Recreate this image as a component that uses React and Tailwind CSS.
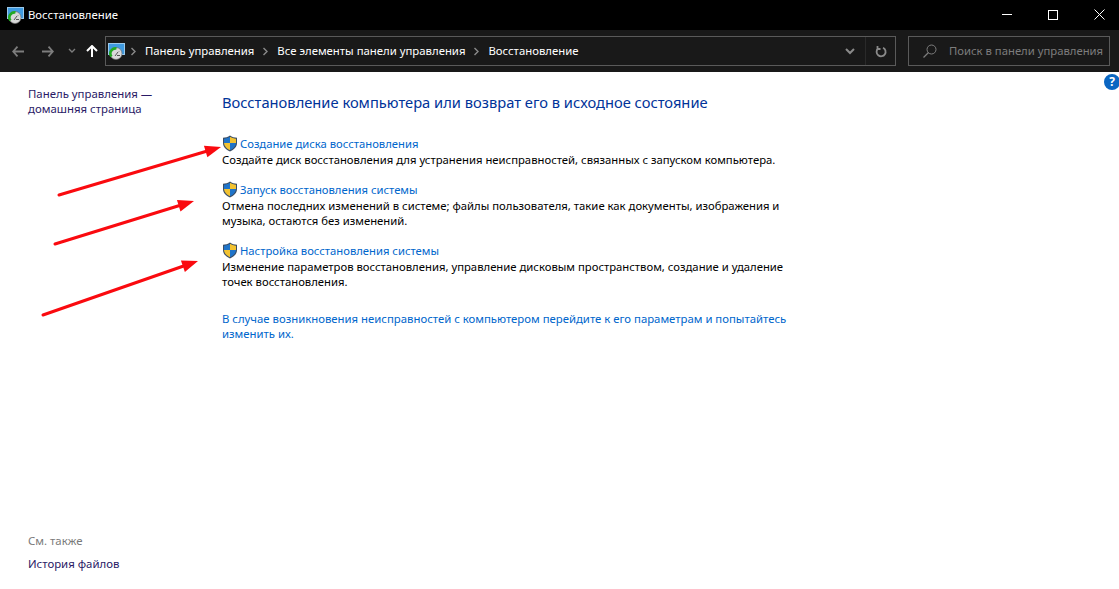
import React from 'react';

function AppIcon() {
  return (
    <svg width="17" height="17" viewBox="0 0 17 17" className="shrink-0">
      <rect x="0.500" y="0.500" width="16" height="11" fill="#3f9ae0" stroke="#9cc9ea" strokeWidth="1" />
      <circle cx="8" cy="10.500" r="6" fill="#d9d9d9" stroke="#6f6f6f" strokeWidth="0.700" />
      <path d="M3.500 13.500A5 5 0 0 1 8.500 5.500" fill="none" stroke="#22a822" strokeWidth="2.600" />
      <path d="M7 13l3-4M9 12.500h3M10.500 8l.5.500" stroke="#555" strokeWidth="1" />
    </svg>
  );
}

function Shield() {
  return (
    <svg width="16" height="17" viewBox="0 0 16 17" className="shrink-0">
      <path d="M8 .5C6 2 3.500 2.700 1 2.800V8c0 4 3 6.800 7 8.500 4-1.700 7-4.500 7-8.500V2.800C12.500 2.700 10 2 8 .5z" fill="#3b4d63" />
      <path d="M8 1.800V8H2V3.700c2.200-.1 4.300-.7 6-1.900z" fill="#1f74c9" />
      <path d="M8 1.800c1.700 1.200 3.800 1.800 6 1.900V8H8z" fill="#f2c230" />
      <path d="M2 8h6v7.200C4.700 13.700 2.200 11.300 2 8z" fill="#f2c230" />
      <path d="M8 8h6c-.2 3.300-2.700 5.700-6 7.200z" fill="#1f74c9" />
    </svg>
  );
}

function Chevron() {
  return (
    <svg width="7" height="9" viewBox="0 0 7 9" className="shrink-0">
      <path d="M1.500 1l3.500 3.500L1.500 8" fill="none" stroke="#8a8a8a" strokeWidth="1.400" />
    </svg>
  );
}

function Arrow({ x1, y1, x2, y2 }) {
  const a = Math.atan2(y2 - y1, x2 - x1);
  const bx = x2 - 16 * Math.cos(a);
  const by = y2 - 16 * Math.sin(a);
  const nx = -Math.sin(a) * 6;
  const ny = Math.cos(a) * 6;
  return (
    <>
      <line x1={x1} y1={y1} x2={bx} y2={by} stroke="#fa0a0f" strokeWidth="3" strokeLinecap="round" />
      <polygon points={`${x2},${y2} ${bx + nx},${by + ny} ${bx - nx},${by - ny}`} fill="#fa0a0f" />
    </>
  );
}

function Task({ title, children }) {
  return (
    <div className="flex flex-col">
      <div className="flex items-center gap-[2px] h-[17px]">
        <Shield />
        <a className="text-[#0066cc] text-[11.25px] leading-[16px] whitespace-nowrap">{title}</a>
      </div>
      <p className="text-black text-[11.3px] leading-[15px] whitespace-pre-line">{children}</p>
    </div>
  );
}

export default function App() {
  return (
    <div className="relative w-[1119px] h-[589px] overflow-hidden bg-white font-['Noto_Sans','Open_Sans',sans-serif]">
      <div className="h-[30px] bg-black flex items-center pl-[7px]">
        <AppIcon />
        <span className="ml-[4px] text-white text-[11.35px]">Восстановление</span>
        <div className="ml-auto -mr-[3px] pb-[1px] flex items-center">
          <div className="w-[46px] h-[29px] flex items-center justify-center">
            <div className="w-[10px] h-[1px] bg-white" />
          </div>
          <div className="w-[46px] h-[29px] flex items-center justify-center">
            <div className="w-[10px] h-[10px] border border-white" />
          </div>
          <div className="w-[46px] h-[29px] flex items-center justify-center">
            <svg width="11" height="11" viewBox="0 0 11 11">
              <path d="M.5.5l10 10M10.500.5l-10 10" stroke="#fff" strokeWidth="1" />
            </svg>
          </div>
        </div>
      </div>

      <div className="h-[42px] bg-[#191919] flex items-center pr-[9px]">
        <div className="w-[105px] flex items-center shrink-0">
          <svg width="12" height="11" viewBox="0 0 12 11" className="ml-[12px]">
            <path d="M5.500.7L1.200 5.500l4.300 4.800M1.500 5.500H12" fill="none" stroke="#7d7d7d" strokeWidth="1.800" />
          </svg>
          <svg width="12" height="11" viewBox="0 0 12 11" className="ml-[18px]">
            <path d="M6.500.7l4.300 4.800-4.300 4.800M10.500 5.500H0" fill="none" stroke="#7d7d7d" strokeWidth="1.800" />
          </svg>
          <svg width="8" height="6" viewBox="0 0 8 6" className="ml-[14px]">
            <path d="M1 1l3 3 3-3" fill="none" stroke="#7d7d7d" strokeWidth="1.400" />
          </svg>
          <svg width="12" height="12" viewBox="0 0 12 12" className="ml-[10px]">
            <path d="M1 6l5-5 5 5M6 1.500V12" fill="none" stroke="#fff" strokeWidth="2" />
          </svg>
        </div>
        <div className="h-[30px] w-[791px] shrink-0 border border-[#5a5a5a] flex items-center pl-[2px]">
          <AppIcon />
          <div className="ml-[5px]"><Chevron /></div>
          <span className="ml-[8px] text-[11.35px] text-white whitespace-nowrap">Панель управления</span>
          <div className="ml-[8px]"><Chevron /></div>
          <span className="ml-[8px] text-[11.35px] text-white whitespace-nowrap">Все элементы панели управления</span>
          <div className="ml-[8px]"><Chevron /></div>
          <span className="ml-[8px] text-[11.35px] text-white whitespace-nowrap">Восстановление</span>
          <div className="ml-auto flex items-center h-full">
            <svg width="10" height="7" viewBox="0 0 10 7" className="mr-[10px]">
              <path d="M1 1l4 4 4-4" fill="none" stroke="#8a8a8a" strokeWidth="2" />
            </svg>
            <div className="w-[30px] h-full border-l border-[#2a2a2a] flex items-center justify-center">
              <svg width="12" height="13" viewBox="0 0 12 13">
                <path d="M3 3.500a4.500 4.500 0 1 0 5-.8M2.500 1v3h3" fill="none" stroke="#8a8a8a" strokeWidth="1.800" />
              </svg>
            </div>
          </div>
        </div>
        <div className="ml-auto h-[30px] w-[202px] border border-[#5a5a5a] flex items-center pl-[14px]">
          <svg width="14" height="14" viewBox="0 0 14 14">
            <circle cx="8.500" cy="5.500" r="4.500" fill="none" stroke="#7d7d7d" strokeWidth="1" />
            <path d="M5.500 8.500L.5 13.500" stroke="#7d7d7d" strokeWidth="1.200" />
          </svg>
          <span className="ml-[12px] text-[11.3px] text-[#7d7d7d] whitespace-nowrap">Поиск в панели управления</span>
        </div>
      </div>

      <div className="flex h-[517px]">
        <div className="w-[222px] shrink-0 pl-[28px] pt-[14px] flex flex-col">
          <a className="text-[#2a1a66] text-[11.4px] leading-[15px] whitespace-pre-line">{'Панель управления —\nдомашняя страница'}</a>
          <div className="mt-auto pb-[17px] flex flex-col">
            <span className="text-[#7a7a7a] text-[11.4px] leading-[16px]">См. также</span>
            <a className="mt-[7px] text-[#2a1a66] text-[11.4px] leading-[16px]">История файлов</a>
          </div>
        </div>
        <div className="flex-1 pt-[20px]">
          <h1 className="text-[#003399] text-[14.7px] leading-[20px] whitespace-nowrap">Восстановление компьютера или возврат его в исходное состояние</h1>
          <div className="mt-[23px] flex flex-col gap-[14px]">
            <Task title="Создание диска восстановления">Создайте диск восстановления для устранения неисправностей, связанных с запуском компьютера.</Task>
            <Task title="Запуск восстановления системы">{'Отмена последних изменений в системе; файлы пользователя, такие как документы, изображения и\nмузыка, остаются без изменений.'}</Task>
            <Task title="Настройка восстановления системы">{'Изменение параметров восстановления, управление дисковым пространством, создание и удаление\nточек восстановления.'}</Task>
          </div>
          <a className="block mt-[22px] text-[#0066cc] text-[11.35px] leading-[15px] whitespace-pre-line">{'В случае возникновения неисправностей с компьютером перейдите к его параметрам и попытайтесь\nизменить их.'}</a>
        </div>
      </div>

      <div className="absolute left-[1104px] top-[74px] w-[16px] h-[16px] rounded-full bg-[#0a66c2] text-white text-[12px] font-bold leading-[16px] text-center">?</div>

      <svg width="1119" height="589" className="absolute left-0 top-0 pointer-events-none">
        <Arrow x1={59} y1={195} x2={221} y2={147} />
        <Arrow x1={55} y1={244} x2={194} y2={201} />
        <Arrow x1={43} y1={315} x2={198} y2={261} />
      </svg>
    </div>
  );
}
